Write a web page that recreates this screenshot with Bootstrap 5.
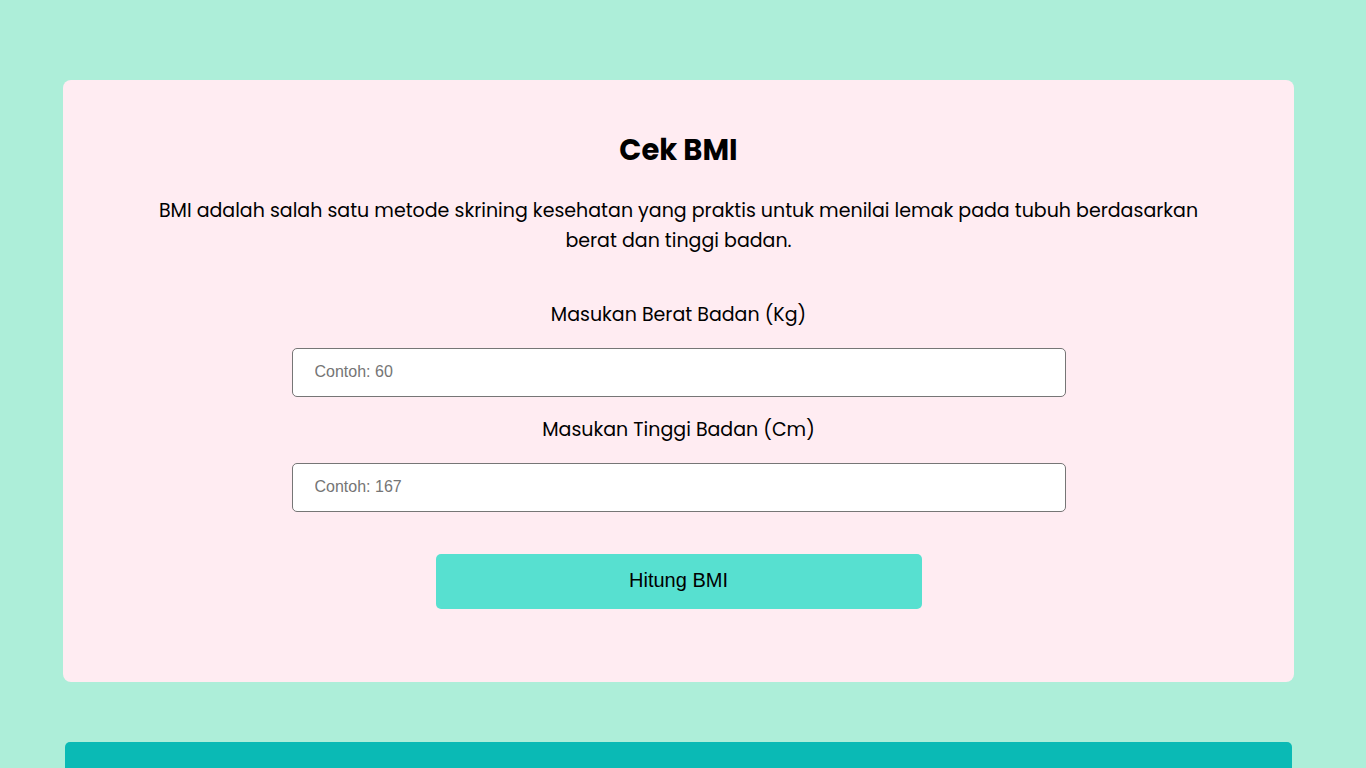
<!DOCTYPE html>
<html lang="id">
<head>
<meta charset="utf-8">
<meta name="viewport" content="width=device-width, initial-scale=1">
<title>Cek BMI</title>
<link href="https://cdn.jsdelivr.net/npm/bootstrap@5.3.0/dist/css/bootstrap.min.css" rel="stylesheet">
<style>
body{background:#adeed9;color:#000;font-family:Poppins,"Open Sans",sans-serif;font-size:19px;line-height:30px}
main{padding:80px 72px 0 63px}
.bmi-panel{background:#ffecf2;border-radius:8px;padding:48px 80px 73px}
.bmi-title{font-size:29px;line-height:44px;font-weight:700;margin-bottom:24px}
.bmi-intro{margin-bottom:44px}
.bmi-form{max-width:774px}
.bmi-field{height:49px;border:1px solid #767676;border-radius:5px;padding:0 22px 2px;margin:18px 0;font-family:"Liberation Sans",Arial,sans-serif;font-size:16px;color:#000}
.bmi-field::placeholder{color:#757575}
.bmi-submit{width:486px;max-width:100%;height:55px;margin-top:24px;padding:0 12px 4px;background:#57e0d0;border:0;border-radius:5px;font-family:"Liberation Sans",Arial,sans-serif;font-size:20px;color:#000}
.bmi-submit:hover{background:#0abab5}
.result-panel{background:#0abab5;border-radius:5px 5px 0 0;margin:60px 2px 0}
</style>
</head>
<body>
<main class="min-vh-100 d-flex flex-column">
<section class="bmi-panel text-center">
<h1 class="bmi-title">Cek BMI</h1>
<p class="bmi-intro">BMI adalah salah satu metode skrining kesehatan yang praktis untuk menilai lemak pada tubuh berdasarkan berat dan tinggi badan.</p>
<form class="bmi-form mx-auto">
<label class="d-block" for="berat">Masukan Berat Badan (Kg)</label>
<input class="form-control bmi-field" id="berat" type="text" placeholder="Contoh: 60">
<label class="d-block" for="tinggi">Masukan Tinggi Badan (Cm)</label>
<input class="form-control bmi-field" id="tinggi" type="text" placeholder="Contoh: 167">
<button class="btn bmi-submit" type="button">Hitung BMI</button>
</form>
</section>
<section class="result-panel flex-grow-1"></section>
</main>
<script src="https://cdn.jsdelivr.net/npm/bootstrap@5.3.0/dist/js/bootstrap.bundle.min.js"></script>
</body>
</html>
